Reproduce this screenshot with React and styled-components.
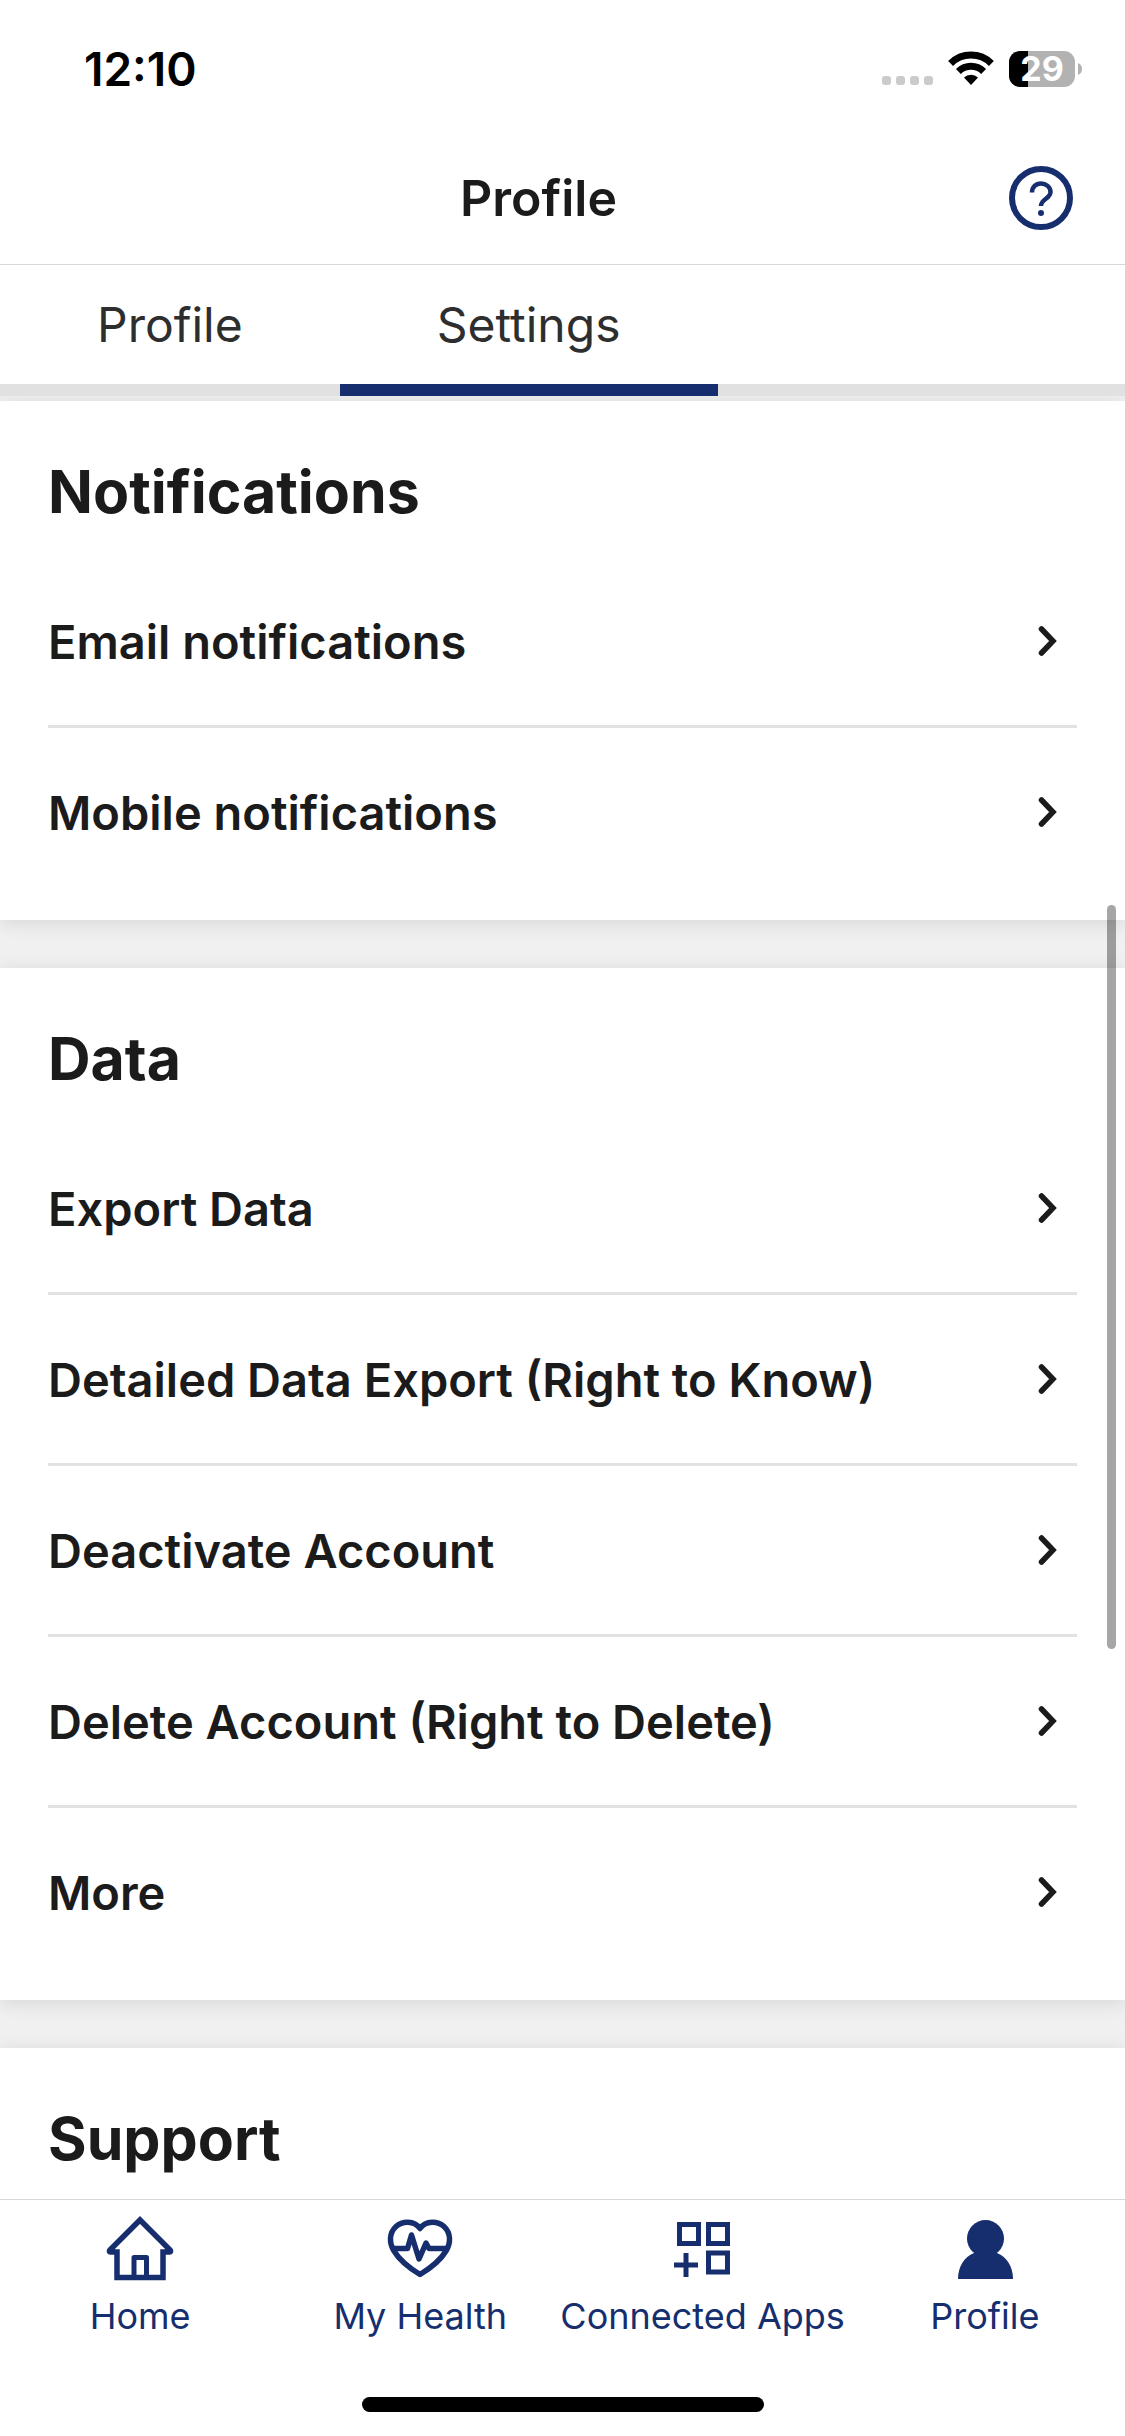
import styled, { createGlobalStyle } from "styled-components";

const GlobalStyle = createGlobalStyle`
  *, *::before, *::after {
    box-sizing: border-box;
  }

  body {
    margin: 0;
    background: #f0f0f0;
    font-family: Inter, sans-serif;
    color: #1b1b1b;
  }

  button {
    padding: 0;
    border: 0;
    background: none;
    color: inherit;
    font: inherit;
    cursor: pointer;
  }
`;

const sections = [
  {
    title: "Notifications",
    items: ["Email notifications", "Mobile notifications"],
  },
  {
    title: "Data",
    items: [
      "Export Data",
      "Detailed Data Export (Right to Know)",
      "Deactivate Account",
      "Delete Account (Right to Delete)",
      "More",
    ],
  },
  {
    title: "Support",
    items: [],
  },
];

const Screen = styled.div`
  position: relative;
  display: flex;
  flex-direction: column;
  height: 100vh;
`;

const StatusBar = styled.div`
  display: flex;
  align-items: center;
  justify-content: space-between;
  height: 138px;
  padding: 0 43px 0 84px;
  background: #fff;
`;

const Time = styled.span`
  font-size: 46px;
  font-weight: 600;
  color: #000;
`;

const StatusIcons = styled.div`
  display: flex;
  align-items: center;
  gap: 15px;
`;

const Battery = styled.div`
  display: flex;
  align-items: center;
  gap: 3px;
`;

const BatteryBody = styled.div`
  width: 66px;
  height: 36px;
  border-radius: 11px;
  background: linear-gradient(to right, #000 19px, #b2b2b2 19px);
  color: #fff;
  font-size: 34px;
  font-weight: 700;
  line-height: 36px;
  text-align: center;
`;

const Header = styled.header`
  display: grid;
  grid-template-columns: 1fr auto 1fr;
  align-items: center;
  height: 127px;
  padding: 0 52px 6px 4px;
  border-bottom: 1px solid #d8d8d8;
  background: #fff;
`;

const HeaderTitle = styled.h1`
  grid-column: 2;
  margin: 0;
  font-size: 50px;
  font-weight: 600;
`;

const HelpButton = styled.button`
  justify-self: end;
  display: flex;
`;

const Tabs = styled.div`
  display: flex;
  height: 131px;
  background: linear-gradient(to top, #e1e1e1 12px, #fff 12px);
`;

const Tab = styled.button`
  padding: 0 97px;
  border-bottom: 12px solid ${({ $active }) => ($active ? "#162e6e" : "transparent")};
  color: #2e2e2e;
  font-size: 48px;
  font-weight: 400;
`;

const Content = styled.main`
  flex: 1;
  min-height: 0;
  overflow: hidden;
  display: flex;
  flex-direction: column;
  gap: 48px;
  padding-top: 5px;
`;

const Card = styled.section`
  flex-shrink: 0;
  padding: 0 48px 24px;
  background: #fff;
  box-shadow: 0 3px 18px rgba(0, 0, 0, 0.11);

  &:last-child {
    flex-grow: 1;
    padding-bottom: 0;
  }
`;

const CardTitle = styled.h2`
  display: flex;
  align-items: center;
  height: 156px;
  margin: 0;
  padding-top: 24px;
  font-size: 59px;
  font-weight: 700;
`;

const List = styled.ul`
  margin: 0;
  padding: 0;
  list-style: none;
`;

const ListItem = styled.li`
  & + & {
    border-top: 3px solid #e2e2e2;
  }
`;

const RowButton = styled.button`
  display: flex;
  align-items: center;
  justify-content: space-between;
  width: 100%;
  height: 168px;
  padding-right: 20px;
  font-size: 47px;
  font-weight: 600;
  text-align: left;
`;

const ScrollThumb = styled.div`
  position: absolute;
  top: 905px;
  right: 9px;
  width: 9px;
  height: 744px;
  border-radius: 5px;
  background: rgba(0, 0, 0, 0.35);
`;

const BottomBar = styled.footer`
  display: flex;
  flex-direction: column;
  align-items: center;
  justify-content: space-between;
  height: 237px;
  padding-bottom: 24px;
  border-top: 1px solid #d8d8d8;
  background: #fff;
`;

const Nav = styled.nav`
  display: grid;
  grid-template-columns: repeat(4, 1fr);
  width: 100%;
`;

const NavLink = styled.a`
  display: flex;
  flex-direction: column;
  align-items: center;
  gap: 8px;
  padding-top: 14px;
  color: #162e6e;
  font-size: 36px;
  line-height: 44px;
  text-decoration: none;
  white-space: nowrap;
`;

const HomeIndicator = styled.div`
  width: 402px;
  height: 15px;
  border-radius: 8px;
  background: #000;
`;

const SignalDots = () => (
  <svg width="51" height="36" viewBox="0 0 51 36" fill="#cbcbcb" aria-hidden="true">
    {[0, 14, 28, 42].map((x) => (
      <rect key={x} x={x} y="25" width="9" height="9" rx="3" />
    ))}
  </svg>
);

const WifiIcon = () => (
  <svg width="46" height="36" viewBox="0 0 46 36" aria-hidden="true">
    <g fill="none" stroke="#000" strokeWidth="7">
      <path d="M2.6 12.4a29 29 0 0 1 40.8 0" />
      <path d="M10.4 20.4a18 18 0 0 1 25.2 0" />
    </g>
    <path d="M16 26.6a10 10 0 0 1 14 0L23 34z" />
  </svg>
);

const BatteryTip = () => (
  <svg width="4" height="12" viewBox="0 0 4 12" fill="#b2b2b2" aria-hidden="true">
    <path d="M0 0c2.5.8 4 3.4 4 6s-1.5 5.2-4 6z" />
  </svg>
);

const HelpIcon = () => (
  <svg width="64" height="64" viewBox="0 0 64 64" fill="none" aria-hidden="true">
    <circle cx="32" cy="32" r="29" stroke="#162e6e" strokeWidth="6" />
    <path
      d="M23 26.5c0-5.5 4-9 9-9s9.5 3.5 9.5 8.5c0 7-9.5 6.5-9.5 14"
      stroke="#162e6e"
      strokeWidth="4.5"
    />
    <circle cx="32" cy="47" r="3" fill="#162e6e" />
  </svg>
);

const ChevronIcon = () => (
  <svg width="19" height="32" viewBox="0 0 19 32" fill="none" aria-hidden="true">
    <path d="M3.5 4L15 16 3.5 28" stroke="#1b1b1b" strokeWidth="5.5" strokeLinecap="round" />
  </svg>
);

const HomeIcon = () => (
  <svg width="72" height="72" viewBox="0 0 72 72" fill="none" stroke="#162e6e" strokeWidth="5.5" aria-hidden="true">
    <path d="M13 38v25.5h46V38h6.5c1.2 0 1.6-1 .8-1.8L36 6 5.7 36.2c-.8.8-.4 1.8.8 1.8z" />
    <path d="M30 63V43.5h12.5V63" strokeWidth="5" strokeLinejoin="round" />
  </svg>
);

const HealthIcon = () => (
  <svg width="72" height="72" viewBox="0 0 72 72" fill="none" stroke="#162e6e" strokeWidth="5.5" strokeLinejoin="round" aria-hidden="true">
    <path d="M36 14.5C30 6 18 7 12 12.5 5 19 5 29 10 37c6 10 17 18 26 23.5C45 55 56 47 62 37c5-8 5-18-2-24.5C54 7 42 6 36 14.5z" />
    <path d="M9 34.5h14.5L27.5 21 35 45l7-16 3 5.5h19" />
  </svg>
);

const AppsIcon = () => (
  <svg width="72" height="72" viewBox="0 0 72 72" fill="none" stroke="#162e6e" strokeWidth="5" aria-hidden="true">
    <rect x="12.5" y="10.5" width="19" height="19" />
    <rect x="41.5" y="10.5" width="19" height="19" />
    <rect x="41.5" y="39" width="19" height="19" />
    <path d="M7 51h24M19 39v24" />
  </svg>
);

const ProfileIcon = () => (
  <svg width="72" height="72" viewBox="0 0 72 72" fill="#162e6e" aria-hidden="true">
    <circle cx="36.5" cy="24.5" r="18.5" />
    <path d="M25 39h23c10 4 16 14 16 26H9c0-12 6-22 16-26z" />
  </svg>
);

const navItems = [
  { label: "Home", Icon: HomeIcon },
  { label: "My Health", Icon: HealthIcon },
  { label: "Connected Apps", Icon: AppsIcon },
  { label: "Profile", Icon: ProfileIcon },
];

const App = () => {
  return (
    <>
      <GlobalStyle />
      <Screen>
        <StatusBar>
          <Time>12:10</Time>
          <StatusIcons>
            <SignalDots />
            <WifiIcon />
            <Battery>
              <BatteryBody>29</BatteryBody>
              <BatteryTip />
            </Battery>
          </StatusIcons>
        </StatusBar>
        <Header>
          <HeaderTitle>Profile</HeaderTitle>
          <HelpButton aria-label="Help">
            <HelpIcon />
          </HelpButton>
        </Header>
        <Tabs role="tablist">
          <Tab role="tab" aria-selected="false">
            Profile
          </Tab>
          <Tab role="tab" aria-selected="true" $active>
            Settings
          </Tab>
        </Tabs>
        <Content>
          {sections.map(({ title, items }) => (
            <Card key={title}>
              <CardTitle>{title}</CardTitle>
              {items.length > 0 && (
                <List>
                  {items.map((item) => (
                    <ListItem key={item}>
                      <RowButton>
                        {item}
                        <ChevronIcon />
                      </RowButton>
                    </ListItem>
                  ))}
                </List>
              )}
            </Card>
          ))}
        </Content>
        <BottomBar>
          <Nav>
            {navItems.map(({ label, Icon }) => (
              <NavLink key={label} href="#">
                <Icon />
                {label}
              </NavLink>
            ))}
          </Nav>
          <HomeIndicator />
        </BottomBar>
        <ScrollThumb />
      </Screen>
    </>
  );
};

export default App;
